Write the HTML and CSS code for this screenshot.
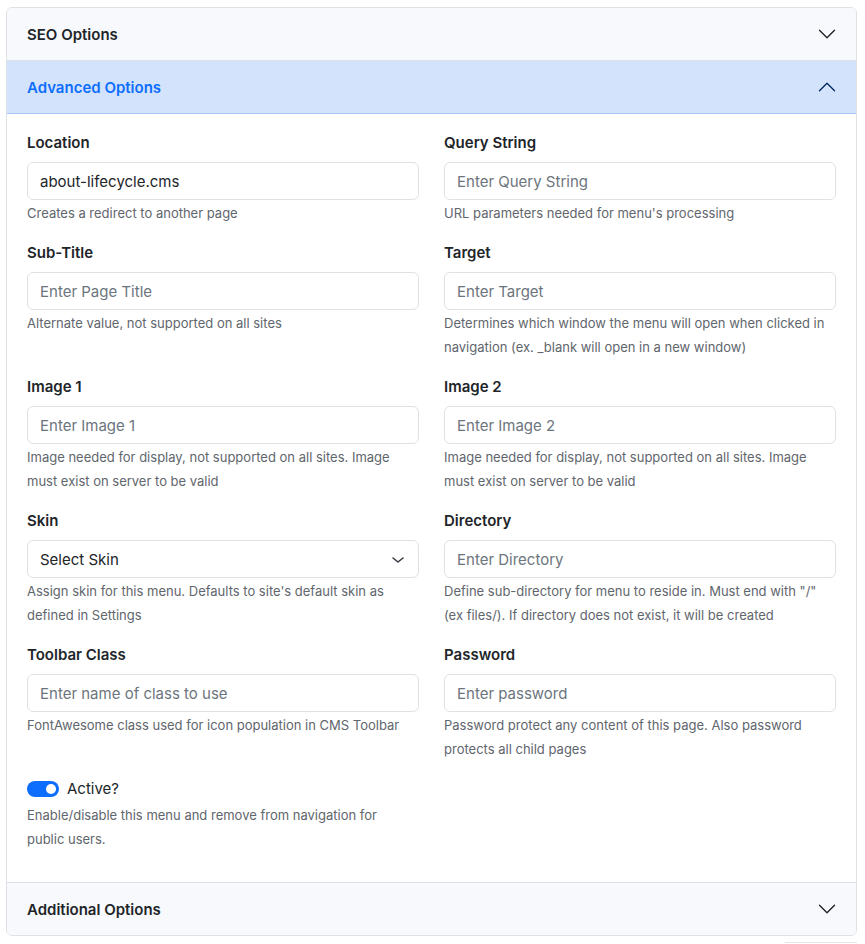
FILE: index.html
```html
<!DOCTYPE html>
<html lang="en">
<head>
<meta charset="utf-8">
<title>Menu Options</title>
<link rel="stylesheet" href="styles.css">
</head>
<body>
<div class="accordion">
  <div class="acc-item">
    <div class="acc-header">
      <span>SEO Options</span>
      <svg class="chev" viewBox="0 0 16 16" fill="none" stroke="#212529" stroke-width="1.1" stroke-linecap="round" stroke-linejoin="round"><path d="M2 5L8 11L14 5"/></svg>
    </div>
  </div>
  <div class="acc-item">
    <div class="acc-header active">
      <span>Advanced Options</span>
      <svg class="chev" viewBox="0 0 16 16" fill="none" stroke="#052c65" stroke-width="1.1" stroke-linecap="round" stroke-linejoin="round"><path d="M2 11L8 5L14 11"/></svg>
    </div>
    <div class="acc-body">
      <div class="grid">
        <div class="field">
          <label class="lbl">Location</label>
          <div class="input filled">about-lifecycle.cms</div>
          <div class="help">Creates a redirect to another page</div>
        </div>
        <div class="field">
          <label class="lbl">Query String</label>
          <div class="input">Enter Query String</div>
          <div class="help">URL parameters needed for menu's processing</div>
        </div>
        <div class="field">
          <label class="lbl">Sub-Title</label>
          <div class="input">Enter Page Title</div>
          <div class="help">Alternate value, not supported on all sites</div>
        </div>
        <div class="field">
          <label class="lbl">Target</label>
          <div class="input">Enter Target</div>
          <div class="help">Determines which window the menu will open when clicked in navigation (ex. _blank will open in a new window)</div>
        </div>
        <div class="field">
          <label class="lbl">Image 1</label>
          <div class="input">Enter Image 1</div>
          <div class="help">Image needed for display, not supported on all sites. Image must exist on server to be valid</div>
        </div>
        <div class="field">
          <label class="lbl">Image 2</label>
          <div class="input">Enter Image 2</div>
          <div class="help">Image needed for display, not supported on all sites. Image must exist on server to be valid</div>
        </div>
        <div class="field">
          <label class="lbl">Skin</label>
          <div class="input select filled">
            <span>Select Skin</span>
            <svg class="sel-arrow" viewBox="0 0 16 16" fill="none" stroke="#343a40" stroke-width="1.6" stroke-linecap="round" stroke-linejoin="round"><path d="M3 6l5 4 5-4"/></svg>
          </div>
          <div class="help">Assign skin for this menu. Defaults to site's default skin as defined in Settings</div>
        </div>
        <div class="field">
          <label class="lbl">Directory</label>
          <div class="input">Enter Directory</div>
          <div class="help">Define sub-directory for menu to reside in. Must end with "/" (ex files/). If directory does not exist, it will be created</div>
        </div>
        <div class="field">
          <label class="lbl">Toolbar Class</label>
          <div class="input">Enter name of class to use</div>
          <div class="help">FontAwesome class used for icon population in CMS Toolbar</div>
        </div>
        <div class="field">
          <label class="lbl">Password</label>
          <div class="input">Enter password</div>
          <div class="help">Password protect any content of this page. Also password protects all child pages</div>
        </div>
        <div class="field">
          <div class="switch-row">
            <span class="switch"><span class="knob"></span></span>
            <span class="switch-label">Active?</span>
          </div>
          <div class="help narrow">Enable/disable this menu and remove from navigation for public users.</div>
        </div>
      </div>
    </div>
  </div>
  <div class="acc-item">
    <div class="acc-header">
      <span>Additional Options</span>
      <svg class="chev" viewBox="0 0 16 16" fill="none" stroke="#212529" stroke-width="1.1" stroke-linecap="round" stroke-linejoin="round"><path d="M2 5L8 11L14 5"/></svg>
    </div>
  </div>
</div>
<div class="below"></div>
</body>
</html>
```
FILE: styles.css
```css
* { box-sizing: border-box; }
html, body { background: #ffffff; }
body {
  margin: 7px 8px 0 6px;
  font-family: Inter, "Noto Sans", "Liberation Sans", sans-serif;
  font-size: 15px;
  color: #212529;
}
.accordion {
  border: 1px solid #dee2e6;
  border-radius: 6px;
  overflow: hidden;
}
.acc-item + .acc-item { border-top: 1px solid #dee2e6; }
.acc-header {
  display: flex;
  align-items: center;
  justify-content: space-between;
  padding: 15px 19px 13px 20px;
  line-height: 24px;
  font-weight: 600;
  font-size: 15px;
  background: #f8f9fc;
  color: #212529;
}
.acc-header .chev { margin-top: -2px; }
.acc-header.active {
  background: #d3e3fb;
  color: #0d6efd;
  box-shadow: inset 0 -1px 0 #aac6f2;
  padding-bottom: 14px;
}
.chev { width: 20px; height: 20px; display: block; }
.acc-body { padding: 16px 20px 16px; }
.grid {
  display: grid;
  grid-template-columns: 1fr 1fr;
  column-gap: 25px;
}
.field { margin-bottom: 15px; }
.lbl {
  display: block;
  line-height: 24px;
  font-weight: 600;
  padding-top: 1px;
  margin-bottom: 7px;
}
.input {
  height: 38px;
  border: 1px solid #dee2e6;
  border-radius: 6px;
  padding: 1px 12px 0;
  line-height: 35px;
  color: #6c757d;
  background: #fff;
}
.input.filled { color: #212529; }
.select { display: flex; align-items: center; justify-content: space-between; padding-right: 12px; }
.sel-arrow { width: 16px; height: 16px; display: block; }
.help {
  margin-top: 1px;
  font-size: 13px;
  line-height: 24px;
  color: #5f666d;
}
.help.narrow { max-width: 365px; margin-top: 2px; }
.switch-row {
  display: flex;
  align-items: center;
  gap: 8px;
  min-height: 24px;
  padding-top: 1px;
  margin-bottom: 1px;
}
.switch {
  position: relative;
  width: 32px;
  height: 16px;
  border-radius: 8px;
  background: #0d6efd;
  display: inline-block;
  flex: none;
}
.knob {
  position: absolute;
  right: 3px;
  top: 3px;
  width: 10px;
  height: 10px;
  border-radius: 50%;
  background: #fff;
}
.switch-label { font-size: 15px; line-height: 24px; }
.below {
  margin: 6px 0 0 auto;
  width: 72px;
  border-top: 1px solid #e3e5e8;
}
```
